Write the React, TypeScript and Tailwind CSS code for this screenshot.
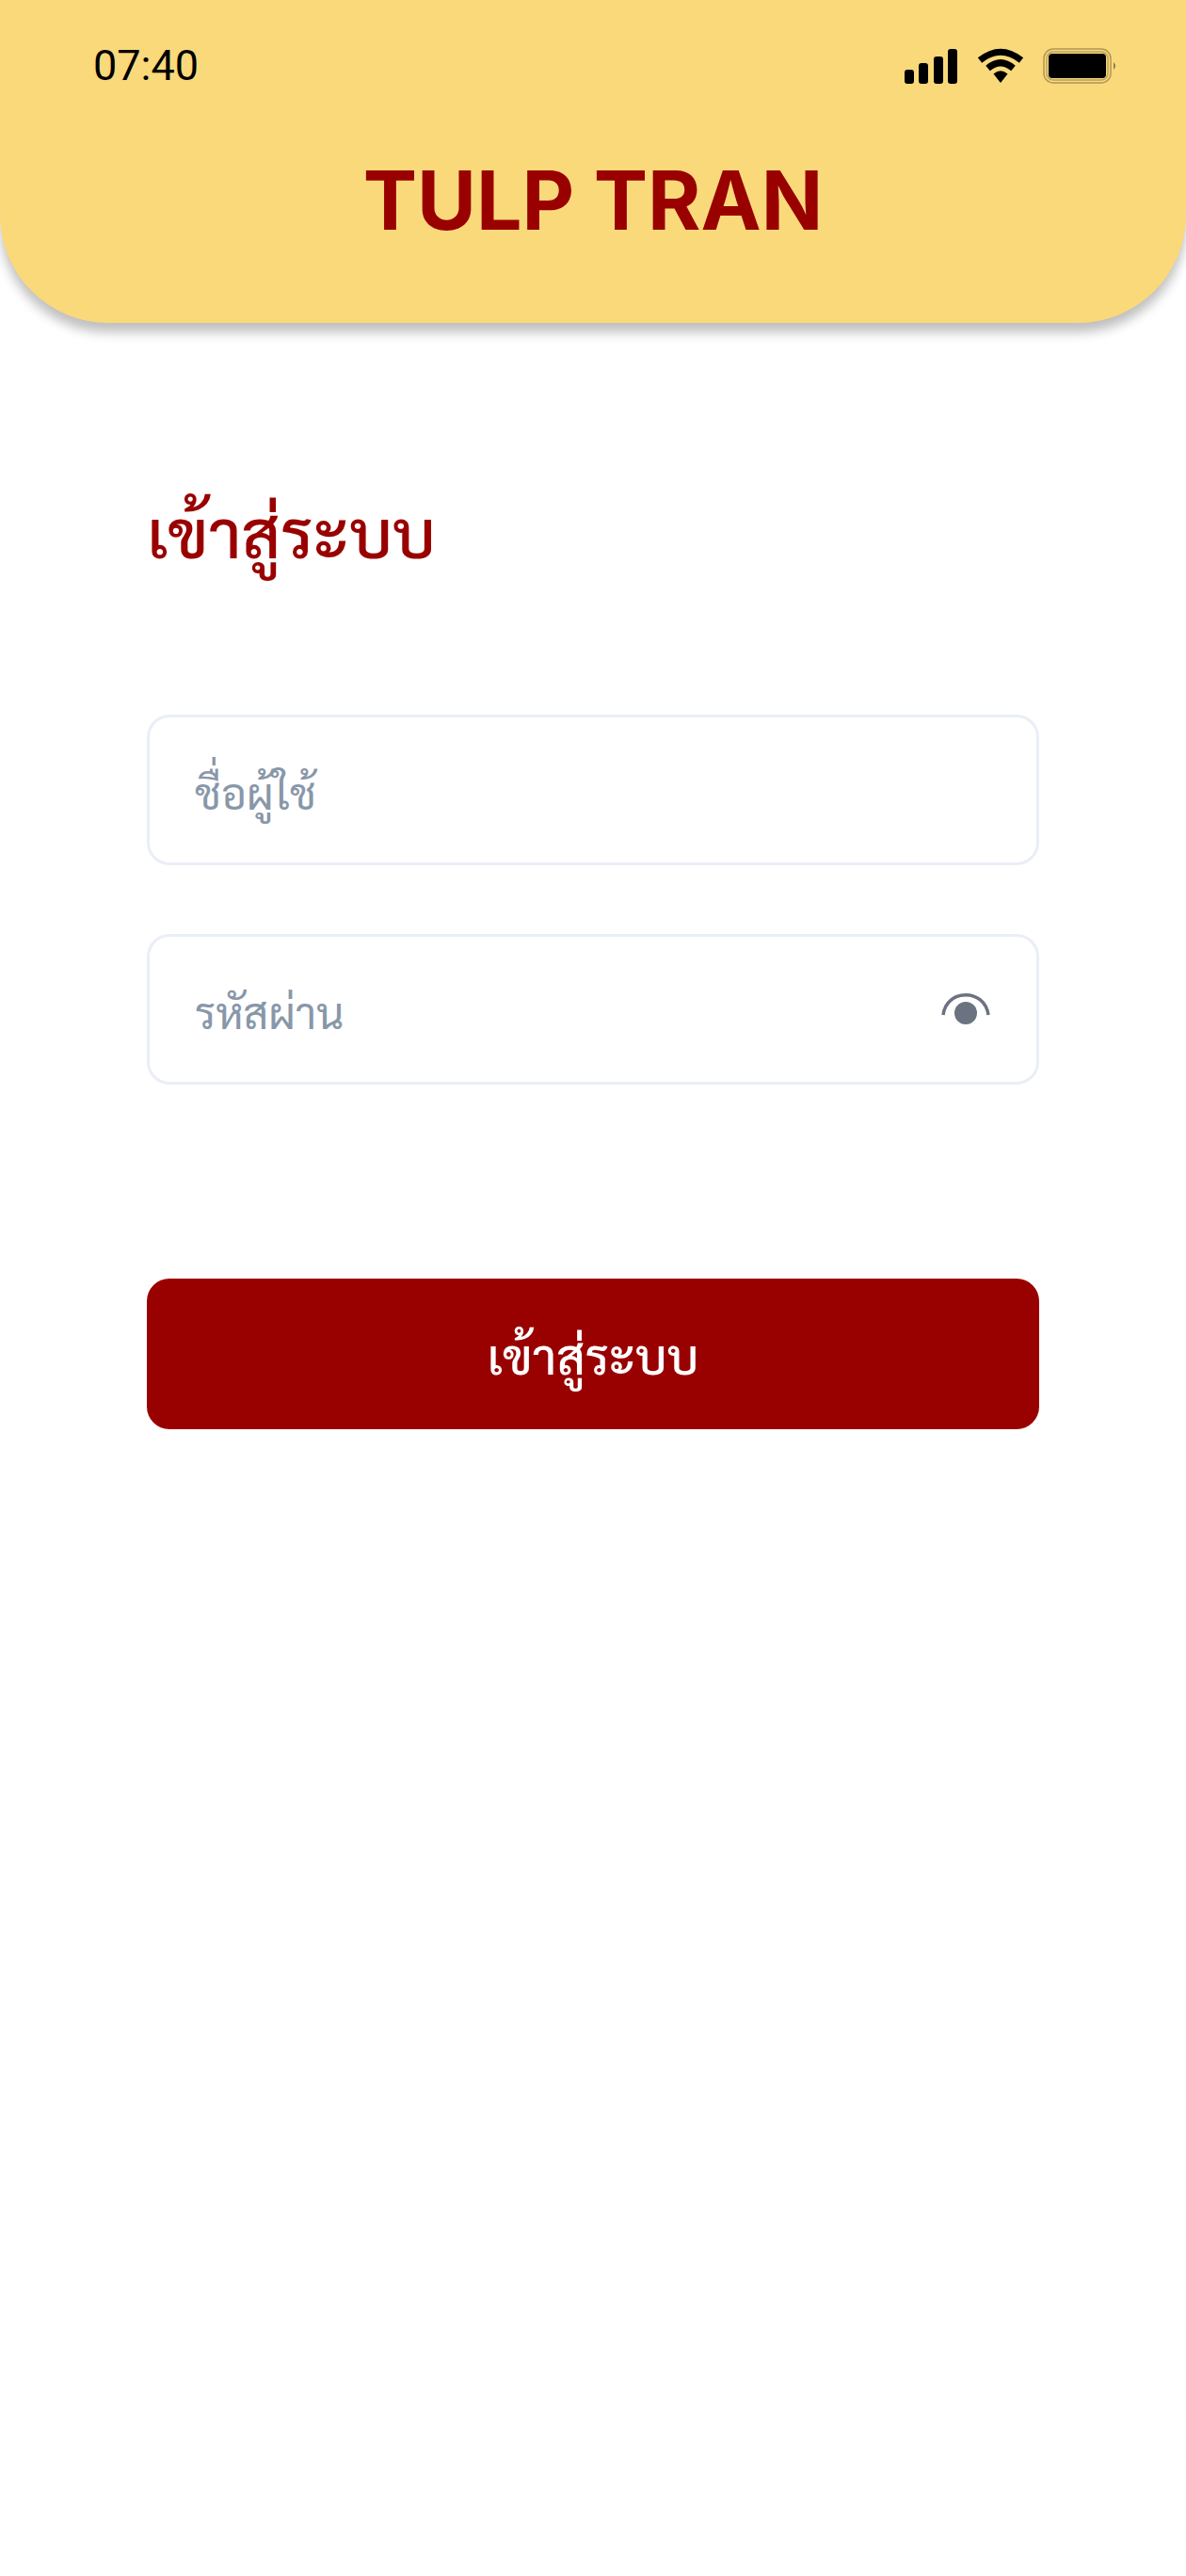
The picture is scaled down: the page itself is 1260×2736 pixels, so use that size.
import { useState } from "react";

function SignalIcon() {
  return (
    <svg width="57" height="38" viewBox="0 0 57 38" aria-hidden="true">
      <rect x="0" y="23" width="10" height="15" rx="3" />
      <rect x="15" y="16" width="10" height="22" rx="3" />
      <rect x="31" y="9" width="10" height="29" rx="3" />
      <rect x="46" y="1" width="10" height="37" rx="3" />
    </svg>
  );
}

function WifiIcon() {
  return (
    <svg width="50" height="38" viewBox="0 0 50 38" aria-hidden="true">
      <g fill="none" stroke="black" strokeWidth="7">
        <path d="M3 13 Q25 -4.5 47 13" />
        <path d="M11.5 21.5 Q25 10 38.5 21.5" />
      </g>
      <path d="M17.5 27.5 Q25 21 32.5 27.5 L25 37 Z" />
    </svg>
  );
}

function BatteryIcon() {
  return (
    <svg width="80" height="38" viewBox="0 0 80 38" aria-hidden="true">
      <g fill="none" stroke="black">
        <rect x="1" y="1" width="71" height="36" rx="10" strokeOpacity="0.3" strokeWidth="1.5" />
        <rect x="4" y="4" width="65" height="30" rx="7" strokeOpacity="0.25" strokeWidth="1.5" />
      </g>
      <rect x="6" y="6" width="61" height="26" rx="4" />
      <path d="M75 15 Q79 19 75 23 Z" fillOpacity="0.45" />
    </svg>
  );
}

function EyeIcon() {
  return (
    <svg width="52" height="36" viewBox="0 0 52 36" aria-hidden="true">
      <path d="M2 24 C6 -4.5 46 -4.5 50 24" fill="none" stroke="#6b7280" strokeWidth="3.5" />
      <circle cx="26" cy="22" r="12" fill="#6b7280" />
    </svg>
  );
}

const fieldClass =
  "peer h-[160px] w-full rounded-[24px] border-[3px] border-[#eaeef7] bg-white px-12 text-[46px] text-black outline-none focus:border-[#990000]";

const labelClass =
  "pointer-events-none absolute inset-y-0 left-[51px] flex items-center pt-1 text-[46px] text-[#8897a9] peer-[:not(:placeholder-shown)]:hidden";

export default function App() {
  const [visible, setVisible] = useState(false);

  return (
    <div className="min-h-screen bg-white font-['Sarabun','Noto_Sans_Thai_Looped','Noto_Sans','Noto_Sans_Thai',sans-serif]">
      <header className="rounded-b-[115px] bg-[#fad97a] pb-[57px] shadow-[0_10px_12px_rgba(0,0,0,0.25)]">
        <div className="flex h-[140px] items-center justify-between pr-[72px] pl-[99px]">
          <time className="font-['Roboto',sans-serif] text-[45px]">07:40</time>
          <div className="flex items-center gap-5">
            <SignalIcon />
            <WifiIcon />
            <BatteryIcon />
          </div>
        </div>
        <h1 className="text-center font-['Inter',sans-serif] text-[86px] leading-[146px] font-bold text-[#990000]">
          TULP TRAN
        </h1>
      </header>

      <main className="px-[156px] pt-[156px]">
        <h2 className="text-[71px] leading-[128px] font-medium text-[#990000]">เข้าสู่ระบบ</h2>
        <form className="mt-[132px] flex flex-col" onSubmit={(e) => e.preventDefault()}>
          <div className="relative">
            <input id="username" className={fieldClass} type="text" placeholder=" " autoComplete="username" />
            <label htmlFor="username" className={labelClass}>
              ชื่อผู้ใช้
            </label>
          </div>
          <div className="relative mt-[73px]">
            <input
              id="password"
              className={fieldClass}
              type={visible ? "text" : "password"}
              placeholder=" "
              autoComplete="current-password"
            />
            <label htmlFor="password" className={labelClass}>
              รหัสผ่าน
            </label>
            <button
              type="button"
              aria-label="แสดงรหัสผ่าน"
              aria-pressed={visible}
              onClick={() => setVisible(!visible)}
              className="absolute inset-y-0 right-[52px] flex items-center"
            >
              <EyeIcon />
            </button>
          </div>
          <button type="submit" className="mt-[206px] h-[160px] rounded-[24px] bg-[#990000] text-[52px] font-medium text-white">
            เข้าสู่ระบบ
          </button>
        </form>
      </main>
    </div>
  );
}
